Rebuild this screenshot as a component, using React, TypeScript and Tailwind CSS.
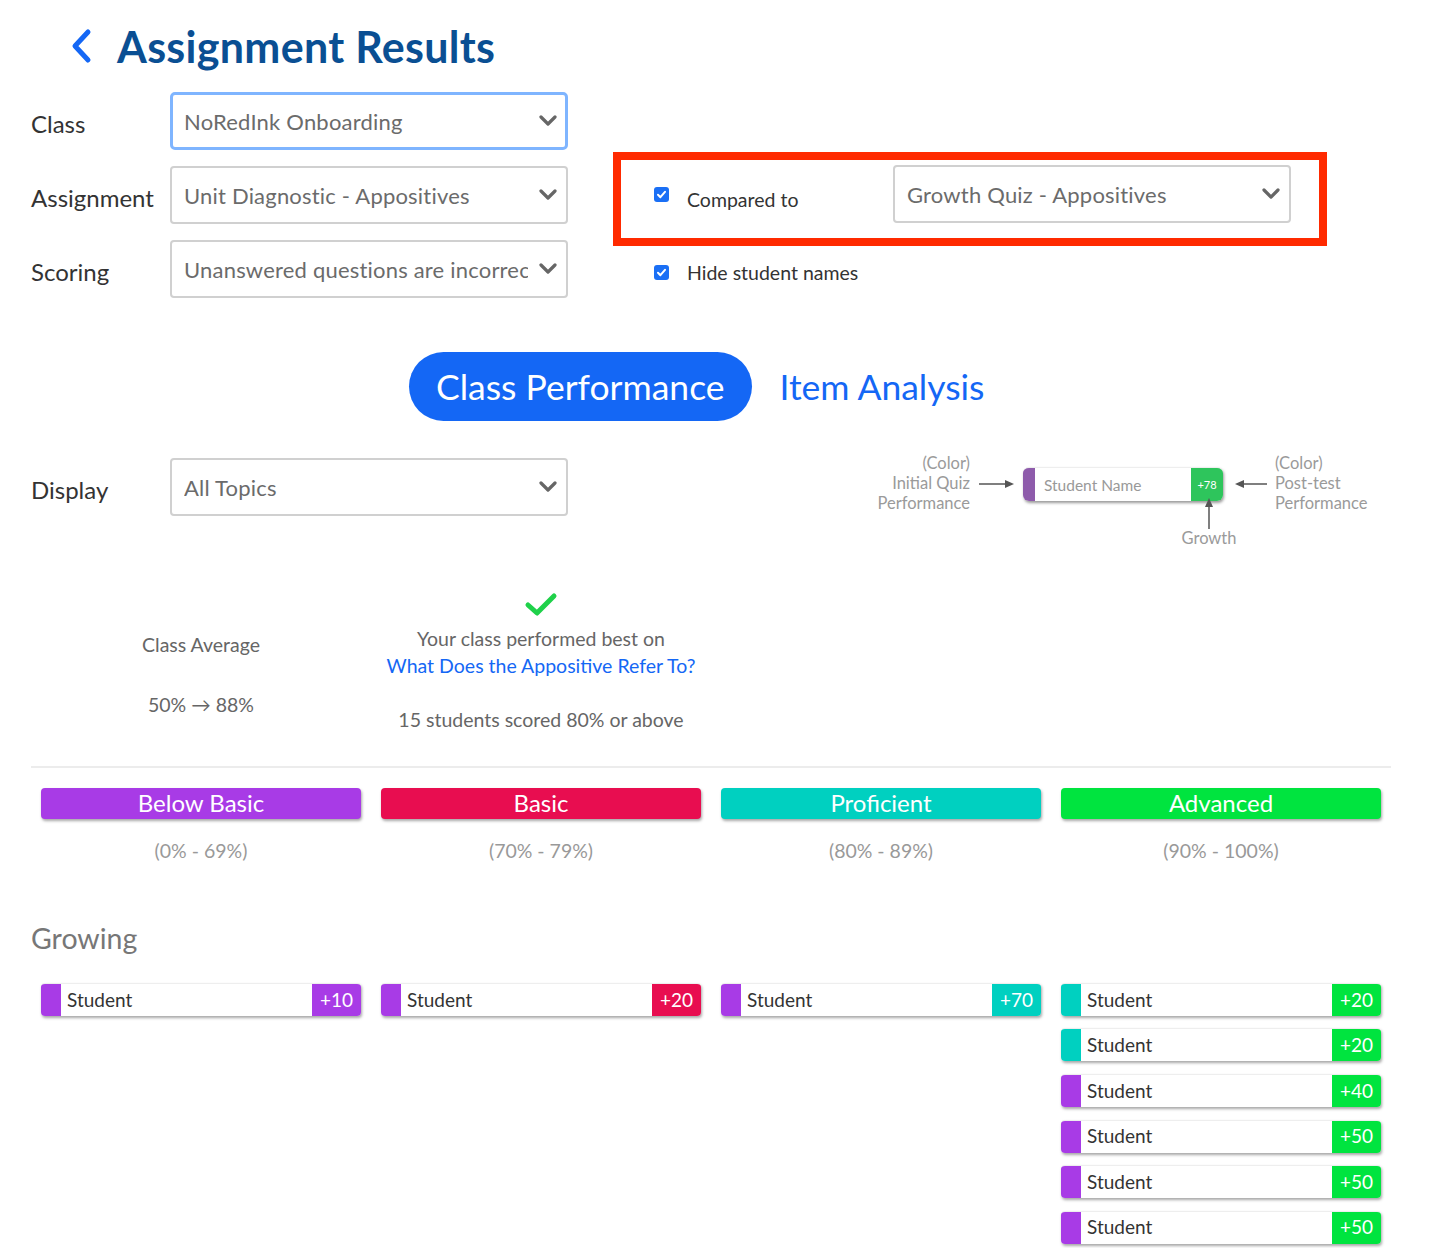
import React from "react";

const font = { fontFamily: "Lato, 'Open Sans', sans-serif" };

function Chevron() {
  return (
    <svg width="20" height="12" viewBox="0 0 20 12" className="shrink-0">
      <path d="M3 2 L10 9 L17 2" fill="none" stroke="#666" strokeWidth="3.2" strokeLinecap="round" strokeLinejoin="round" />
    </svg>
  );
}

function Select({ value, focused }: { value: string; focused?: boolean }) {
  return (
    <div
      className={
        focused
          ? "w-[398px] h-[58px] rounded-[5px] border-[3px] border-[#7fb5ff] bg-white flex items-center pl-[11px] pr-[7px] gap-[10px]"
          : "w-[398px] h-[58px] rounded-[4px] border-2 border-[#d0d0d0] bg-white flex items-center pl-[12px] pr-[8px] gap-[10px]"
      }
    >
      <span className="flex-1 overflow-hidden whitespace-nowrap text-[22px] tracking-[0.2px] text-[#6b6b6b]">{value}</span>
      <Chevron />
    </div>
  );
}

function Checkbox() {
  return (
    <span className="w-[15px] h-[15px] rounded-[3px] bg-[#1a6ff5] flex items-center justify-center shrink-0">
      <svg width="11" height="11" viewBox="0 0 11 11">
        <path d="M2 5.8 L4.4 8.2 L9 2.8" fill="none" stroke="white" strokeWidth="2" strokeLinecap="round" strokeLinejoin="round" />
      </svg>
    </span>
  );
}

function FieldRow({ label, value, focused }: { label: string; value: string; focused?: boolean }) {
  return (
    <div className="flex items-center">
      <span className="w-[139px] text-[24px] text-[#333] mt-[6px]">{label}</span>
      <Select value={value} focused={focused} />
    </div>
  );
}

const levels = [
  { name: "Below Basic", range: "(0% - 69%)", color: "bg-[#a83be6]" },
  { name: "Basic", range: "(70% - 79%)", color: "bg-[#e80d50]" },
  { name: "Proficient", range: "(80% - 89%)", color: "bg-[#00d0c0]" },
  { name: "Advanced", range: "(90% - 100%)", color: "bg-[#00e43f]" },
];

const purple = "bg-[#a83be6]";
const red = "bg-[#e80d50]";
const teal = "bg-[#00d0c0]";
const green = "bg-[#00e43f]";

const columns = [
  [{ from: purple, to: purple, growth: "+10" }],
  [{ from: purple, to: red, growth: "+20" }],
  [{ from: purple, to: teal, growth: "+70" }],
  [
    { from: teal, to: green, growth: "+20" },
    { from: teal, to: green, growth: "+20" },
    { from: purple, to: green, growth: "+40" },
    { from: purple, to: green, growth: "+50" },
    { from: purple, to: green, growth: "+50" },
    { from: purple, to: green, growth: "+50" },
  ],
];

function StudentCard({ from, to, growth }: { from: string; to: string; growth: string }) {
  return (
    <div className="h-[33px] flex rounded-[4px] overflow-hidden bg-white shadow-[1px_2px_3px_rgba(0,0,0,0.35)] border-t border-[#eee]">
      <span className={`w-[20px] ${from}`} />
      <span className="flex-1 flex items-center pl-[6px] text-[19px] text-[#333]">Student</span>
      <span className={`w-[49px] flex items-center justify-center text-[19px] text-white ${to}`}>{growth}</span>
    </div>
  );
}

function Legend() {
  return (
    <div className="flex items-start text-[16.5px] leading-[20px] text-[#9a9a9a]">
      <div className="text-right w-[100px] mt-[-1px] whitespace-nowrap">
        (Color)
        <br />
        Initial Quiz
        <br />
        Performance
      </div>
      <svg width="40" height="12" viewBox="0 0 40 12" className="mt-[24px] ml-[8px]">
        <path d="M1 6 H30" stroke="#555" strokeWidth="1.5" />
        <path d="M27 2 L36 6 L27 10 Z" fill="#555" />
      </svg>
      <div className="relative ml-[5px] mt-[13px]">
        <div className="w-[200px] h-[34px] flex rounded-[6px] overflow-hidden bg-white shadow-[1px_2px_3px_rgba(0,0,0,0.4)] border-t border-[#eee]">
          <span className="w-[12px] bg-[#8e5bab]" />
          <span className="flex-1 flex items-center pl-[9px] text-[15.5px] text-[#999]">Student Name</span>
          <span className="w-[32px] bg-[#2ec55c] text-white text-[11px] flex items-center justify-center">+78</span>
        </div>
        <div className="absolute left-[160px] top-[30px] w-[52px] flex flex-col items-center">
          <svg width="10" height="32" viewBox="0 0 10 32">
            <path d="M5 6 V32" stroke="#555" strokeWidth="1.5" />
            <path d="M1 10 L5 1 L9 10 Z" fill="#555" />
          </svg>
          <span className="mt-[-1px]">Growth</span>
        </div>
      </div>
      <svg width="40" height="12" viewBox="0 0 40 12" className="mt-[24px] ml-[8px]">
        <path d="M10 6 H36" stroke="#555" strokeWidth="1.5" />
        <path d="M13 2 L4 6 L13 10 Z" fill="#555" />
      </svg>
      <div className="ml-[4px] mt-[-1px] whitespace-nowrap">
        (Color)
        <br />
        Post-test
        <br />
        Performance
      </div>
    </div>
  );
}

export default function App() {
  return (
    <div className="w-[1435px] min-h-[1248px] bg-white" style={font}>
      <div className="pl-[31px] w-[1391px]">
        <header className="flex items-center h-[92px] pb-[2px]">
          <svg width="26" height="36" viewBox="0 0 26 36" className="ml-[38px] mr-[22px] mt-[2px]">
            <path d="M19 4 L6 18 L19 32" fill="none" stroke="#1467f5" strokeWidth="5" strokeLinecap="round" strokeLinejoin="round" />
          </svg>
          <h1 className="text-[43px] font-bold text-[#0a4f93] tracking-[0.3px] mt-[4px]">Assignment Results</h1>
        </header>

        <div className="flex">
          <div className="flex flex-col gap-[16px]">
            <FieldRow label="Class" value="NoRedInk Onboarding" focused />
            <FieldRow label="Assignment" value="Unit Diagnostic - Appositives" />
            <FieldRow label="Scoring" value="Unanswered questions are incorrect" />
          </div>
          <div className="ml-[45px] pt-[60px]">
            <div className="w-[714px] border-[8px] border-[#ff2a00] flex items-center pl-[33px] pr-[28px] pt-[5px] pb-[15px]">
              <Checkbox />
              <span className="ml-[18px] text-[19.5px] text-[#333] flex-1 mt-[12px]">Compared to</span>
              <Select value="Growth Quiz - Appositives" />
            </div>
            <div className="flex items-center pl-[41px] mt-[12px]">
              <Checkbox />
              <span className="ml-[18px] text-[19.5px] text-[#333]">Hide student names</span>
            </div>
          </div>
        </div>

        <div className="flex items-center mt-[54px] ml-[378px]">
          <button className="h-[69px] px-[27px] rounded-full bg-[#1467f5] text-white text-[35.5px]">Class Performance</button>
          <span className="ml-[28px] text-[35.5px] text-[#1467f5]">Item Analysis</span>
        </div>

        <div className="flex items-start mt-[37px]">
          <div className="flex items-center">
            <span className="w-[139px] text-[24px] text-[#333] mt-[6px]">Display</span>
            <Select value="All Topics" />
          </div>
          <div className="ml-[302px] mt-[-4px]">
            <Legend />
          </div>
        </div>

        <div className="grid grid-cols-[320px_320px_320px_320px] gap-x-[20px] px-[10px] mt-[76px] text-[19.5px] text-[#666] text-center">
          <div className="flex flex-col items-center pt-[38px]">
            <span>Class Average</span>
            <span className="mt-[31px]">50% → 88%</span>
          </div>
          <div className="flex flex-col items-center">
            <svg width="34" height="26" viewBox="0 0 34 26">
              <path d="M4 13 L13 21 L30 4" fill="none" stroke="#1fd14a" strokeWidth="5" strokeLinecap="round" strokeLinejoin="round" />
            </svg>
            <span className="mt-[6px]">Your class performed best on</span>
            <span className="text-[#1467f5] mt-[-2px]">What Does the Appositive Refer To?</span>
            <span className="mt-[24px]">15 students scored 80% or above</span>
          </div>
        </div>

        <div className="h-[2px] bg-[#ececec] mt-[32px]" />

        <div className="grid grid-cols-[320px_320px_320px_320px] gap-x-[20px] px-[10px] mt-[20px]">
          {levels.map((l) => (
            <div key={l.name} className="flex flex-col items-center">
              <div className={`w-full h-[31px] rounded-[4px] ${l.color} shadow-[1px_2px_3px_rgba(0,0,0,0.35)] flex items-center justify-center text-white text-[24px]`}>
                {l.name}
              </div>
              <span className="mt-[17px] text-[19.5px] text-[#999]">{l.range}</span>
            </div>
          ))}
        </div>

        <h2 className="mt-[52px] text-[28.5px] text-[#777]">Growing</h2>

        <div className="grid grid-cols-[320px_320px_320px_320px] gap-x-[20px] px-[10px] mt-[23px] items-start">
          {columns.map((col, i) => (
            <div key={i} className="flex flex-col gap-[12.6px]">
              {col.map((c, j) => (
                <StudentCard key={j} {...c} />
              ))}
            </div>
          ))}
        </div>
      </div>
    </div>
  );
}
